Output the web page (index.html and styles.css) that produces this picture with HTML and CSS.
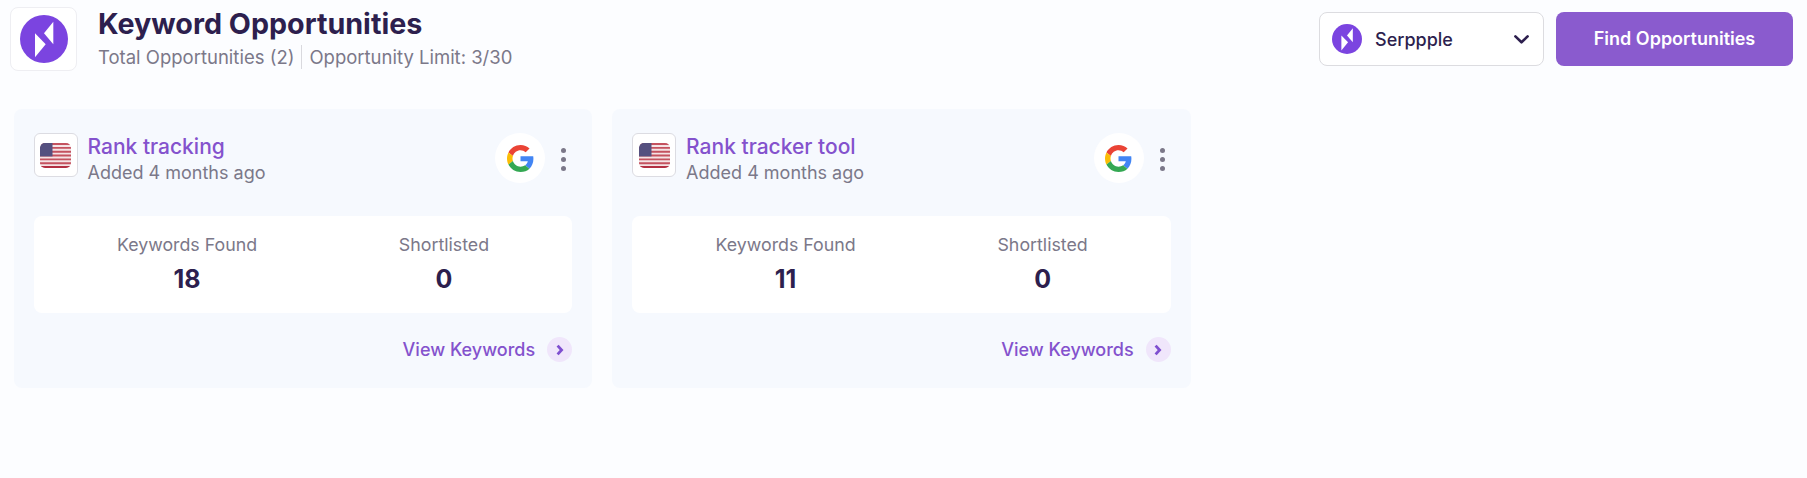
FILE: index.html
```html
<!DOCTYPE html>
<html lang="en">
<head>
<meta charset="utf-8">
<title>Keyword Opportunities</title>
<link rel="stylesheet" href="styles.css">
</head>
<body>
<svg class="sprites" width="0" height="0" aria-hidden="true">
  <symbol id="brand" viewBox="0 0 48 48">
    <circle cx="24" cy="24" r="24" fill="#7b44e0"/>
    <path d="M15 18.3 25.7 29.3 15 42.3z" fill="#fff"/>
    <path d="M33.3 6.7V29.3L24 18.3z" fill="#fff"/>
  </symbol>
  <symbol id="flag" viewBox="0 0 31 25">
    <clipPath id="flag-clip"><rect width="31" height="25" rx="5"/></clipPath>
    <g clip-path="url(#flag-clip)">
      <rect width="31" height="25" fill="#f5e3e5"/>
      <path d="M0 1h31M0 4.85h31M0 8.7h31M0 12.55h31M0 16.4h31M0 20.25h31" stroke="#c4525f" stroke-width="1.92"/>
      <path d="M0 24h31" stroke="#b22f42" stroke-width="2"/>
      <rect width="12.5" height="13.4" fill="#55507f"/>
    </g>
  </symbol>
  <symbol id="google" viewBox="0 0 48 48">
    <path fill="#ea4335" d="M24 9.5c3.54 0 6.71 1.22 9.21 3.6l6.85-6.85C35.9 2.38 30.47 0 24 0 14.62 0 6.51 5.38 2.56 13.22l7.98 6.19C12.43 13.72 17.74 9.5 24 9.5z"/>
    <path fill="#4285f4" d="M46.98 24.55c0-1.57-.15-3.09-.38-4.55H24v9.02h12.94c-.58 2.96-2.26 5.48-4.78 7.18l7.73 6c4.51-4.18 7.09-10.36 7.09-17.65z"/>
    <path fill="#fbbc05" d="M10.53 28.59c-.48-1.45-.76-2.99-.76-4.59s.27-3.14.76-4.59l-7.98-6.19C.92 16.46 0 20.12 0 24c0 3.88.92 7.54 2.56 10.78l7.97-6.19z"/>
    <path fill="#34a853" d="M24 48c6.48 0 11.93-2.13 15.89-5.81l-7.73-6c-2.15 1.45-4.92 2.3-8.16 2.3-6.26 0-11.57-4.22-13.47-9.91l-7.98 6.19C6.51 42.62 14.62 48 24 48z"/>
  </symbol>
</svg>

<header class="top">
  <div class="logo-box"><svg class="logo"><use href="#brand"/></svg></div>
  <div class="heading">
    <h1 class="title">Keyword Opportunities</h1>
    <p class="subtitle"><span>Total Opportunities (2)</span><i class="divider"></i><span>Opportunity Limit: 3/30</span></p>
  </div>
  <div class="actions">
    <div class="select">
      <svg class="select-logo"><use href="#brand"/></svg>
      <span class="select-name">Serppple</span>
      <svg class="caret" viewBox="0 0 15 9"><path d="M1.4 1.4 7.5 7.3l6.1-5.9" fill="none" stroke="#2d1f4e" stroke-width="2.6" stroke-linecap="round" stroke-linejoin="round"/></svg>
    </div>
    <button class="find" type="button">Find Opportunities</button>
  </div>
</header>

<main class="cards">
  <article class="card">
    <div class="card-head">
      <div class="flag-box"><svg class="flag"><use href="#flag"/></svg></div>
      <div class="card-title">
        <h2 class="name">Rank tracking</h2>
        <p class="added">Added 4 months ago</p>
      </div>
      <div class="google-badge"><svg class="google"><use href="#google"/></svg></div>
      <div class="dots"><i></i><i></i><i></i></div>
    </div>
    <div class="stats">
      <div class="stat"><span class="stat-label">Keywords Found</span><strong class="stat-value">18</strong></div>
      <div class="stat"><span class="stat-label">Shortlisted</span><strong class="stat-value">0</strong></div>
    </div>
    <div class="card-foot">
      <span class="view">View Keywords</span>
      <span class="go"><svg viewBox="0 0 8 12" class="go-icon"><path d="M1.6 1.6 5.6 6l-4 4.4" fill="none" stroke="#7f4fd0" stroke-width="2.8"/></svg></span>
    </div>
  </article>

  <article class="card">
    <div class="card-head">
      <div class="flag-box"><svg class="flag"><use href="#flag"/></svg></div>
      <div class="card-title">
        <h2 class="name">Rank tracker tool</h2>
        <p class="added">Added 4 months ago</p>
      </div>
      <div class="google-badge"><svg class="google"><use href="#google"/></svg></div>
      <div class="dots"><i></i><i></i><i></i></div>
    </div>
    <div class="stats">
      <div class="stat"><span class="stat-label">Keywords Found</span><strong class="stat-value">11</strong></div>
      <div class="stat"><span class="stat-label">Shortlisted</span><strong class="stat-value">0</strong></div>
    </div>
    <div class="card-foot">
      <span class="view">View Keywords</span>
      <span class="go"><svg viewBox="0 0 8 12" class="go-icon"><path d="M1.6 1.6 5.6 6l-4 4.4" fill="none" stroke="#7f4fd0" stroke-width="2.8"/></svg></span>
    </div>
  </article>
</main>
</body>
</html>
```
FILE: styles.css
```css
* { box-sizing: border-box; }
html, body { height: 100%; }
body {
  margin: 0;
  background: #fcfdff;
  font-family: "Inter", "Liberation Sans", sans-serif;
  color: #2d1f4e;
  overflow: hidden;
}
.sprites { position: absolute; }

.top {
  display: flex;
  align-items: flex-start;
  padding: 7px 14px 0 10px;
}
.logo-box {
  width: 67px;
  height: 64px;
  background: #fff;
  border: 1px solid #eeeef2;
  border-radius: 8px;
  display: flex;
  align-items: center;
  justify-content: center;
}
.logo { width: 48px; height: 48px; }
.heading { margin-left: 21px; }
.title {
  margin: 0;
  font-size: 28.7px;
  line-height: 34px;
  font-weight: 700;
  color: #2d1f4e;
}
.subtitle {
  margin: 4px 0 0;
  display: flex;
  align-items: center;
  font-size: 18.5px;
  line-height: 24px;
  color: #7b7889;
}
.divider {
  width: 1px;
  height: 24px;
  background: #d9d9de;
  margin: 0 7px;
}
.actions {
  margin-left: auto;
  margin-top: 5px;
  display: flex;
  gap: 12px;
}
.select {
  width: 225px;
  height: 54px;
  background: #fff;
  border: 1.5px solid #dcdce0;
  border-radius: 8px;
  display: flex;
  align-items: center;
  padding: 0 14px 0 12px;
}
.select-logo { width: 30px; height: 30px; }
.select-name {
  margin-left: 13px;
  font-size: 18px;
  font-weight: 500;
  color: #2d1f4e;
}
.caret { width: 15px; height: 9px; margin-left: auto; }
.find {
  width: 237px;
  height: 54px;
  border: 0;
  border-radius: 8px;
  padding: 0 0 2px;
  background: #8a5bce;
  color: #fff;
  font: 600 18px "Inter", "Liberation Sans", sans-serif;
}

.cards {
  display: flex;
  gap: 20px;
  padding: 38px 0 0 13.5px;
}
.card {
  width: 578.6px;
  height: 279px;
  background: #f6f9fe;
  border-radius: 8px;
  padding: 24px 20px 0;
}
.card-head {
  display: flex;
  align-items: flex-start;
}
.flag-box {
  width: 44px;
  height: 44px;
  background: #fff;
  border: 1px solid #dcdce2;
  border-radius: 6px;
  display: flex;
  align-items: center;
  justify-content: center;
}
.flag { width: 31px; height: 25px; }
.card-title { margin-left: 10px; }
.name {
  margin: 0;
  padding-top: 1px;
  font-size: 21px;
  line-height: 26px;
  font-weight: 500;
  color: #8452cd;
}
.added {
  margin: 1px 0 0;
  font-size: 18px;
  line-height: 24px;
  color: #7b7889;
}
.google-badge {
  margin-left: auto;
  width: 50px;
  height: 50px;
  border-radius: 50%;
  background: #fff;
  display: flex;
  align-items: center;
  justify-content: center;
}
.google { width: 27px; height: 27px; }
.dots {
  margin-left: 16px;
  margin-right: 6px;
  padding-top: 15px;
  display: flex;
  flex-direction: column;
  gap: 4px;
}
.dots i {
  display: block;
  width: 5px;
  height: 5px;
  border-radius: 50%;
  background: #7b7889;
}
.stats {
  margin-top: 31px;
  height: 97px;
  background: #fff;
  border-radius: 8px;
  padding: 17px 0 0 25px;
  display: grid;
  grid-template-columns: 257px 257px;
}
.stat {
  display: flex;
  flex-direction: column;
  align-items: center;
}
.stat-label {
  font-size: 17.8px;
  line-height: 24px;
  color: #7b7889;
}
.stat-value {
  margin-top: 8px;
  font-size: 25px;
  line-height: 28px;
  font-weight: 700;
  color: #2d1f4e;
}
.card-foot {
  margin-top: 24px;
  display: flex;
  align-items: center;
  justify-content: flex-end;
}
.view {
  font-size: 18px;
  font-weight: 500;
  color: #8452cd;
}
.go {
  margin-left: 12px;
  width: 25px;
  height: 25px;
  border-radius: 50%;
  background: #f0e6fb;
  display: flex;
  align-items: center;
  justify-content: center;
}
.go-icon { width: 8px; height: 12px; }
```
